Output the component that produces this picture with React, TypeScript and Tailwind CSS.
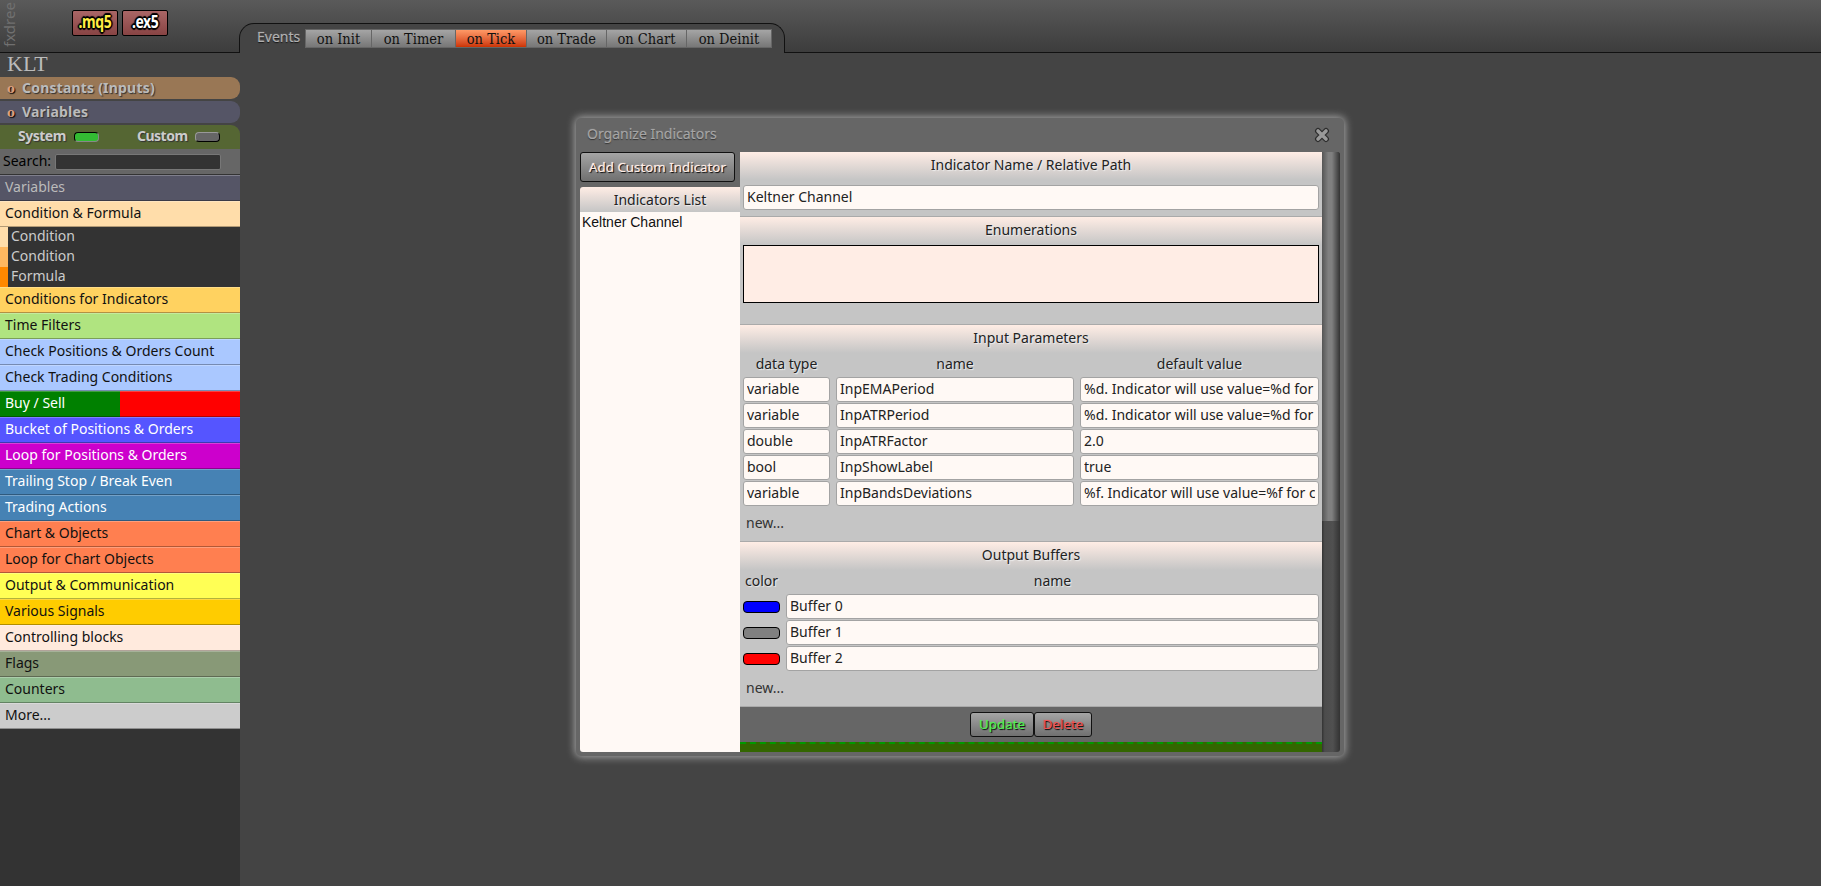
import React from 'react';

// --- Types ---
type Block = { label: string; bg: string; text?: string };
type Param = { type: string; name: string; value: string };

// --- Data ---
const EVENTS = [
  { label: 'on Init', width: 'w-[66px]' },
  { label: 'on Timer', width: 'w-[84px]' },
  { label: 'on Tick', width: 'w-[71px]', active: true },
  { label: 'on Trade', width: 'w-[80px]' },
  { label: 'on Chart', width: 'w-[80px]' },
  { label: 'on Deinit', width: 'w-[85px]' },
];

const CONDITIONS = [
  { label: 'Condition', bg: 'bg-[#ffddaa]' },
  { label: 'Condition', bg: 'bg-[#ffb860]' },
  { label: 'Formula', bg: 'bg-[#ff8800]' },
];

const BLOCKS: Block[] = [
  { label: 'Conditions for Indicators', bg: 'bg-[#ffd260]' },
  { label: 'Time Filters', bg: 'bg-[#b0e480]' },
  { label: 'Check Positions & Orders Count', bg: 'bg-[#aac8ff]' },
  { label: 'Check Trading Conditions', bg: 'bg-[#aac8ff]' },
  { label: 'Buy / Sell', bg: 'bg-[linear-gradient(90deg,#008000_50%,#ff0000_50%)]', text: 'text-white' },
  { label: 'Bucket of Positions & Orders', bg: 'bg-[#5555ff]', text: 'text-white' },
  { label: 'Loop for Positions & Orders', bg: 'bg-[#cc00cc]', text: 'text-white' },
  { label: 'Trailing Stop / Break Even', bg: 'bg-[#4682b4]', text: 'text-white' },
  { label: 'Trading Actions', bg: 'bg-[#4682b4]', text: 'text-white' },
  { label: 'Chart & Objects', bg: 'bg-[#ff7f50]' },
  { label: 'Loop for Chart Objects', bg: 'bg-[#ff7f50]' },
  { label: 'Output & Communication', bg: 'bg-[#ffff55]' },
  { label: 'Various Signals', bg: 'bg-[#ffcc00]' },
  { label: 'Controlling blocks', bg: 'bg-[#ffeadd]' },
  { label: 'Flags', bg: 'bg-[#889977]' },
  { label: 'Counters', bg: 'bg-[#8fbc8f]' },
  { label: 'More...', bg: 'bg-[#cccccc]' },
];

const PARAMS: Param[] = [
  { type: 'variable', name: 'InpEMAPeriod', value: '%d. Indicator will use value=%d for' },
  { type: 'variable', name: 'InpATRPeriod', value: '%d. Indicator will use value=%d for' },
  { type: 'double', name: 'InpATRFactor', value: '2.0' },
  { type: 'bool', name: 'InpShowLabel', value: 'true' },
  { type: 'variable', name: 'InpBandsDeviations', value: '%f. Indicator will use value=%f for c' },
];

const BUFFERS = [
  { name: 'Buffer 0', bg: 'bg-[#0000ff]' },
  { name: 'Buffer 1', bg: 'bg-[#808080]' },
  { name: 'Buffer 2', bg: 'bg-[#ff0000]' },
];

// --- Styling Helpers ---
const exportButton = 'h-[26px] w-[46px] rounded-[2px] border border-black bg-linear-to-b from-[#aa6666] to-[#884444] text-center';
const outline = '[text-shadow:-1px_-1px_1px_#000,1px_-1px_1px_#000,-1px_1px_1px_#000,1px_1px_1px_#000,0_2px_1px_#000,0_-2px_1px_#000,2px_0_1px_#000,-2px_0_1px_#000]';
const exportText = `inline-block scale-x-[0.82] text-[17px] font-bold leading-[22px] tracking-[-0.5px] ${outline}`;
const button = 'rounded-[3px] border border-[#111] bg-linear-to-b from-[#a5a5a5] to-[#707070] text-center text-[13.333px]';
const sectionText = 'text-[#222] [text-shadow:1px_1px_1px_#eee]';

const Field: React.FC<{ value: string; className?: string }> = ({ value, className = '' }) => (
  <div className={`h-[25px] overflow-hidden rounded-[3px] border border-[#a3a3a3] bg-[#fff9f5] px-[3px] ${className}`}>
    <div className="overflow-hidden whitespace-nowrap leading-[22px] text-[#222]">{value}</div>
  </div>
);

const SectionTitle: React.FC<{ children: React.ReactNode }> = ({ children }) => (
  <div className={`h-7 bg-linear-to-b from-[#ffede5] to-[#c5c5c5] text-center leading-[26px] ${sectionText}`}>{children}</div>
);

const BlockRow: React.FC<Block> = ({ label, bg, text = 'text-[#111]' }) => (
  <div className={`h-[26px] border-b border-black/30 pl-[5px] leading-6 shadow-[inset_0_1px_0_rgba(255,255,255,0.25)] ${bg} ${text}`}>{label}</div>
);

const TreeBar: React.FC<{ label: string; bg: string }> = ({ label, bg }) => (
  <div className={`mb-0.5 flex h-[22px] rounded-r-[9px] pl-[7px] font-bold leading-[21px] tracking-[0.2px] text-[#bbb] [text-shadow:1px_1px_1px_#333] ${bg}`}>
    <span className="w-[15px] font-['DejaVu_Serif_Condensed','DejaVu_Serif',serif] text-[13px] leading-[23px] text-[#dda080] [text-shadow:1px_1px_1px_#000]">o</span>
    {label}
  </div>
);

const Header: React.FC = () => (
  <header className="flex h-[53px] shrink-0 bg-linear-to-b from-[#5a5a5a] to-[#3c3c3c]">
    <div className="flex w-[239px] items-start border-b border-[#111]">
      <div className="h-[47px] w-5">
        <div className="h-[47px] w-[18px] rotate-180 text-[15px] leading-[18px] text-[#707070] [writing-mode:vertical-rl]">fxdree</div>
      </div>
      <div className="ml-[52px] mt-[10px] flex gap-1">
        <div className={exportButton}>
          <span className={`text-[#ffee44] ${exportText}`}>.mq5</span>
        </div>
        <div className={exportButton}>
          <span className={`text-white ${exportText}`}>.ex5</span>
        </div>
      </div>
    </div>
    <div className="mt-[23px] flex h-[30px] w-[546px] rounded-t-[15px] border-x border-t border-[#111] bg-[#444] pl-[17px]">
      <div className="w-[48px] pt-[3px] leading-5 text-[#b0b0b0] [text-shadow:0_1px_1px_#111,0_0_1px_#b0b0b0]">Events</div>
      <div className="mt-[5px] flex h-[19px] border-l border-[#666]">
        {EVENTS.map((e) => (
          <div
            key={e.label}
            className={`whitespace-nowrap border border-l-0 border-[#666] bg-linear-to-b text-center font-['DejaVu_Serif_Condensed','DejaVu_Serif',serif] text-[14.5px] leading-[19px] text-[#111] ${e.width} ${e.active ? 'from-[#ff9966] to-[#cc3300]' : 'from-[#a5a5a5] to-[#777]'}`}
          >
            {e.label}
          </div>
        ))}
      </div>
    </div>
    <div className="flex-1 border-b border-[#111]" />
  </header>
);

const Sidebar: React.FC = () => (
  <aside className="flex w-60 shrink-0 flex-col">
    <div className="h-6 pl-[7px] font-['Liberation_Serif',serif] text-[22px] leading-[22px] text-[#bbb]">KLT</div>
    <TreeBar label="Constants (Inputs)" bg="bg-[#997755]" />
    <TreeBar label="Variables" bg="bg-[#555566]" />
    <div className="flex h-6 rounded-tr-[9px] bg-[#556633] font-bold leading-[22px] tracking-[-0.5px] text-[#ccc] [text-shadow:1px_1px_1px_#333]">
      <span className="w-[74px] pl-[18px]">System</span>
      <span className="mt-[7px] h-[10px] w-[25px] rounded-[4px] border border-t-black border-r-[#888] border-b-[#888] border-l-black bg-[#33bb33]" />
      <span className="w-[96px] pl-[38px]">Custom</span>
      <span className="mt-[7px] h-[10px] w-[25px] rounded-[4px] border border-t-[#999] border-r-black border-b-black border-l-[#999] bg-[#666]" />
    </div>
    <div className="flex h-[26px] border-b border-[#333] bg-[#666] pl-[3px] leading-6 text-black">
      <span className="w-[52px]">Search:</span>
      <span className="mt-[5px] h-4 w-[166px] rounded-[2px] border border-[#777] bg-[#333]" />
    </div>
    <BlockRow label="Variables" bg="bg-[#555566]" text="text-[#bbb]" />
    <BlockRow label="Condition & Formula" bg="bg-[#ffddaa]" />
    {CONDITIONS.map((c, i) => (
      <div key={i} className="flex h-5 bg-[#333] leading-[17px] text-[#ccc]">
        <span className={`mr-[3px] w-2 ${c.bg}`} />
        {c.label}
      </div>
    ))}
    {BLOCKS.map((b) => (
      <BlockRow key={b.label} {...b} />
    ))}
    <div className="flex-1 bg-[#333]" />
  </aside>
);

const Dialog: React.FC = () => (
  <section className="flex h-[638px] w-[768px] flex-col rounded-[5px] bg-[#666] px-1 pb-1 shadow-[0_0_8px_1px_#aaa]">
    <div className="flex h-[34px] items-start justify-between pl-[7px] pr-[10px] text-[#a5a5a5] [text-shadow:0_1px_1px_#333,0_0_1px_#a5a5a5]">
      <span className="leading-8">Organize Indicators</span>
      <svg width="16" height="16" viewBox="0 0 16 16" className="mt-[9px]">
        <path d="M4 4l8 8M12 4l-8 8" stroke="#2c2c2c" strokeWidth="6" strokeLinecap="round" />
        <path d="M4 4l8 8M12 4l-8 8" stroke="#999" strokeWidth="3.6" strokeLinecap="round" />
      </svg>
    </div>
    <div className="flex flex-1">
      <div className="flex w-40 flex-col">
        <div className={`h-[30px] w-[155px] leading-[29px] text-[#ffede5] [text-shadow:1px_1px_1px_#000,0_0_1px_#ffede5] ${button}`}>Add Custom Indicator</div>
        <div className={`mt-[5px] h-[25px] rounded-tl-[3px] bg-linear-to-b from-[#ffede5] to-[#c5c5c5] text-center ${sectionText}`}>
          <span className="leading-[25px]">Indicators List</span>
        </div>
        <div className="flex-1 rounded-bl-[3px] bg-[#fff9f5] pl-[2px] font-['Liberation_Sans',sans-serif] leading-5 text-[#111]">Keltner Channel</div>
      </div>

      <div className="flex w-[582px] flex-col">
        <div className="h-[65px] rounded-tl-[2px] border-b border-[#aaa] bg-[#c5c5c5]">
          <SectionTitle>Indicator Name / Relative Path</SectionTitle>
          <Field value="Keltner Channel" className="mx-[3px] mt-[5px]" />
        </div>
        <div className="h-[108px] border-b border-[#aaa] bg-[#c5c5c5]">
          <SectionTitle>Enumerations</SectionTitle>
          <div className="mx-[3px] h-[58px] border border-black bg-[#ffede5]" />
        </div>
        <div className="h-[217px] border-b border-[#aaa] bg-[#c5c5c5]">
          <SectionTitle>Input Parameters</SectionTitle>
          <div className={`grid h-6 grid-cols-[87px_238px_239px] gap-x-[6px] px-[3px] text-center leading-[22px] ${sectionText}`}>
            <span>data type</span>
            <span>name</span>
            <span>default value</span>
          </div>
          <div className="grid grid-cols-[87px_238px_239px] gap-x-[6px] gap-y-px px-[3px]">
            {PARAMS.map((p) => (
              <React.Fragment key={p.name}>
                <Field value={p.type} />
                <Field value={p.name} />
                <Field value={p.value} />
              </React.Fragment>
            ))}
          </div>
          <div className="pl-[6px] pt-[5px] leading-6 text-[#333]">new...</div>
        </div>
        <div className="h-[165px] border-b border-[#aaa] bg-[#c5c5c5]">
          <SectionTitle>Output Buffers</SectionTitle>
          <div className={`grid h-6 grid-cols-[37px_533px] gap-x-[6px] px-[3px] text-center leading-[22px] ${sectionText}`}>
            <span>color</span>
            <span>name</span>
          </div>
          <div className="grid grid-cols-[37px_533px] items-center gap-x-[6px] gap-y-px px-[3px]">
            {BUFFERS.map((b) => (
              <React.Fragment key={b.name}>
                <span className={`h-3 w-[37px] rounded-[4px] border border-black ${b.bg}`} />
                <Field value={b.name} />
              </React.Fragment>
            ))}
          </div>
          <div className="pl-[6px] pt-[5px] leading-6 text-[#333]">new...</div>
        </div>
        <div className="flex h-[35px] justify-center pt-[5px]">
          <div className={`h-[25px] w-16 leading-[23px] text-[#55ee55] [text-shadow:1px_1px_1px_#000,0_0_1px_#55ee55] ${button}`}>Update</div>
          <div className={`h-[25px] w-[58px] leading-[23px] text-[#ee5555] [text-shadow:1px_1px_1px_#000,0_0_1px_#ee5555] ${button}`}>Delete</div>
        </div>
        <div className="flex-1 border-t-2 border-dashed border-[#009900] bg-[#336600]" />
      </div>

      <div className="w-[18px] rounded-r-[3px] bg-[linear-gradient(90deg,#333,#4c4c4c_15%,#505050_60%,#333)]">
        <div className="h-[369px] rounded-tr-[3px] bg-[linear-gradient(90deg,#555,#808080_35%,#808080_55%,#444_90%,#333)]" />
      </div>
    </div>
  </section>
);

const App: React.FC = () => (
  <div className="flex h-[886px] w-[1821px] flex-col overflow-hidden bg-[#444] font-['Noto_Sans',sans-serif] text-[14px]">
    <Header />
    <div className="flex flex-1">
      <Sidebar />
      <main className="pl-[336px] pt-[65px]">
        <Dialog />
      </main>
    </div>
  </div>
);

export default App;
